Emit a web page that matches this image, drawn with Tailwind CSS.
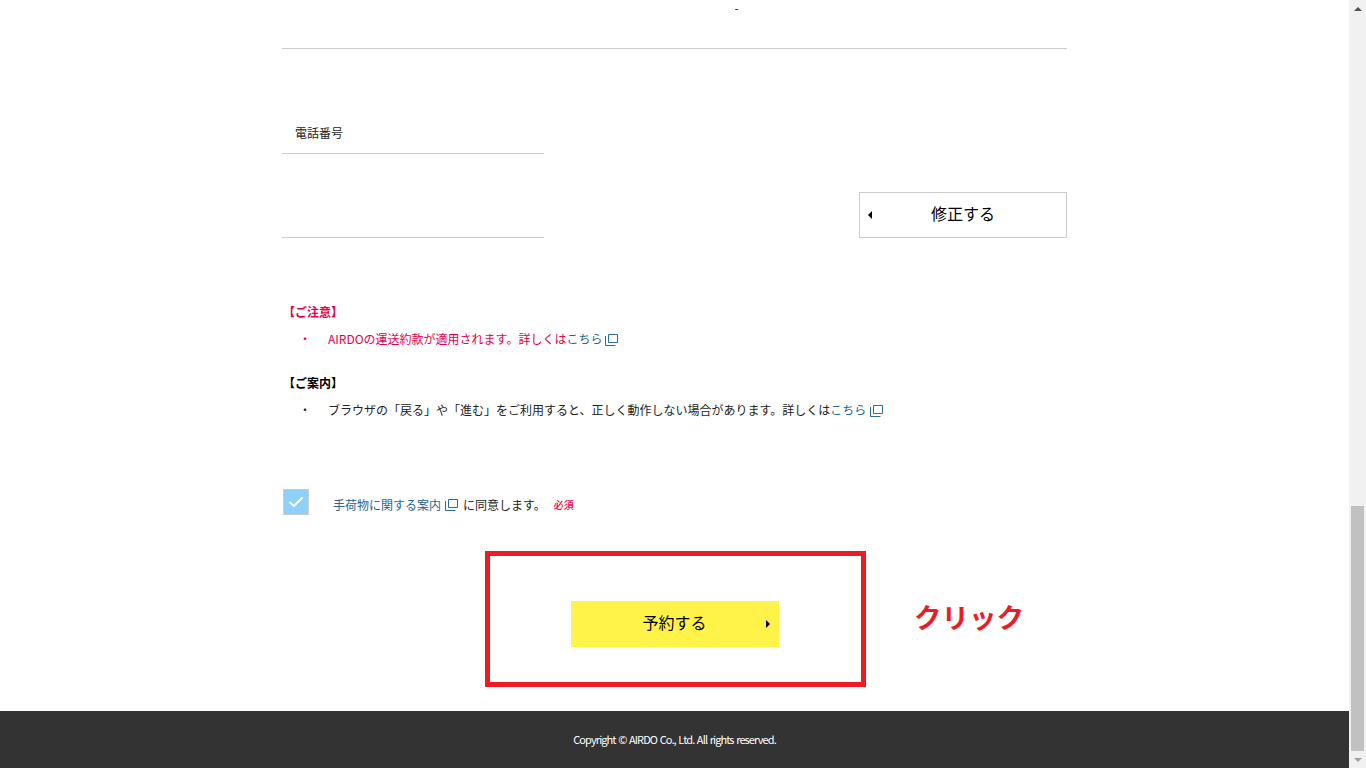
<!DOCTYPE html>
<html lang="ja">
<head>
    <meta charset="UTF-8">
    <meta name="viewport" content="width=device-width, initial-scale=1.0">
    <title>予約内容の確認</title>
    <script src="https://cdn.jsdelivr.net/npm/@tailwindcss/browser@4"></script>
</head>
<body class="h-screen overflow-hidden bg-white text-[12px] text-[#222] font-['Noto_Sans_CJK_JP','Noto_Sans',sans-serif]">
<div class="flex h-[768px]">
    <div class="relative flex-1 flex flex-col min-w-0">
        <main class="w-[785px] mx-auto flex-1">
            <!-- 前の入力欄の続き -->
            <div class="h-[49px] border-b border-[#ccc] flex justify-center">
                <span class="ml-[124px] mt-[-2px] leading-[20px]">-</span>
            </div>

            <div class="flex justify-between items-end">
                <div class="w-[262px]">
                    <div class="mt-[65px] h-[40px] pl-[13px] border-b border-[#ccc] leading-[38px]">電話番号</div>
                    <div class="h-[84px] border-b border-[#ccc]"></div>
                </div>
                <a class="relative flex items-center justify-center w-[208px] h-[46px] pb-[4px] border border-[#ccc] text-[16px] text-black">
                    <span class="absolute left-[8px] top-[18px] w-0 h-0 border-y-[4px] border-y-transparent border-r-[4px] border-r-black"></span>
                    修正する
                </a>
            </div>

            <section class="mt-[62px] pl-[1px] text-[#e6004c]">
                <p class="font-bold leading-[24px]">【ご注意】</p>
                <div class="flex mt-[3px] leading-[24px]">
                    <span class="w-[45px] pl-[16px]">・</span>
                    <p>AIRDOの運送約款が適用されます。詳しくは<a class="text-[#2a6490]">こちら</a></p>
                    <svg class="w-[13px] h-[13px] ml-[3px] mt-[6px] text-[#2a6d9e]" viewBox="0 0 13 13" fill="none" stroke="currentColor"><path d="M3.500 1.500h9v8h-9z"/><path d="M.5 3v9.500h10"/></svg>
                </div>
            </section>

            <section class="mt-[20px] pl-[1px] text-[#222]">
                <p class="font-bold text-black leading-[24px]">【ご案内】</p>
                <div class="flex mt-[3px] leading-[24px]">
                    <span class="w-[45px] pl-[16px]">・</span>
                    <p>ブラウザの「戻る」や「進む」をご利用すると、正しく動作しない場合があります。詳しくは<a class="text-[#2a6490]">こちら</a></p>
                    <svg class="w-[13px] h-[13px] ml-[4px] mt-[6px] text-[#2a6d9e]" viewBox="0 0 13 13" fill="none" stroke="currentColor"><path d="M3.500 1.500h9v8h-9z"/><path d="M.5 3v9.500h10"/></svg>
                </div>
            </section>

            <div class="flex items-center mt-[67px] h-[26px]">
                <span class="ml-[1px] flex items-center justify-center w-[26px] h-[26px] bg-[#8dd1fb] border border-[#ccc]">
                    <svg class="w-[16px] h-[12px]" viewBox="0 0 16 12" fill="none" stroke="#fff" stroke-width="2"><path d="M1.500 6l4.500 4 8.500-8.500"/></svg>
                </span>
                <span class="ml-[24px] mt-[5px] flex items-center leading-[24px]">
                    <a class="text-[#2a6490]">手荷物に関する案内</a>
                    <svg class="w-[13px] h-[13px] ml-[4px] text-[#2a6d9e]" viewBox="0 0 13 13" fill="none" stroke="currentColor"><path d="M3.500 1.500h9v8h-9z"/><path d="M.5 3v9.500h10"/></svg>
                    <span class="ml-[5px]">に同意します。</span>
                    <span class="ml-[8px] text-[10px] font-medium text-[#e6004c]">必須</span>
                </span>
            </div>

            <div class="flex justify-center mt-[86px]">
                <a class="relative flex items-center justify-center w-[208px] h-[46px] pb-[4px] bg-[#fff34a] text-[16px] text-black">
                    予約する
                    <span class="absolute right-[9px] top-[19px] w-0 h-0 border-y-[4px] border-y-transparent border-l-[4px] border-l-black"></span>
                </a>
            </div>
        </main>

        <footer class="h-[57px] bg-[#333] flex items-center justify-center text-white text-[11px] tracking-[-0.9px] [word-spacing:1px]">
            Copyright © AIRDO Co., Ltd. All rights reserved.
        </footer>

        <!-- 説明用の注釈 -->
        <div class="absolute left-[485px] top-[551px] w-[381px] h-[136px] border-[5px] border-[#ed1c24]"></div>
        <div class="absolute left-[914px] top-[597px] text-[27.5px] leading-[38px] font-bold text-[#ed1c24]">クリック</div>
    </div>

    <aside class="w-[17px] bg-[#f1f1f1] flex flex-col items-center">
        <div class="h-[17px] flex items-center justify-center">
            <span class="w-0 h-0 border-x-[4px] border-x-transparent border-b-[4px] border-b-[#505050]"></span>
        </div>
        <div class="flex-1"></div>
        <div class="w-[13px] h-[245px] bg-[#c1c1c1]"></div>
        <div class="h-[17px] flex items-center justify-center">
            <span class="w-0 h-0 border-x-[4px] border-x-transparent border-t-[4px] border-t-[#a0a0a0]"></span>
        </div>
    </aside>
</div>
</body>
</html>
